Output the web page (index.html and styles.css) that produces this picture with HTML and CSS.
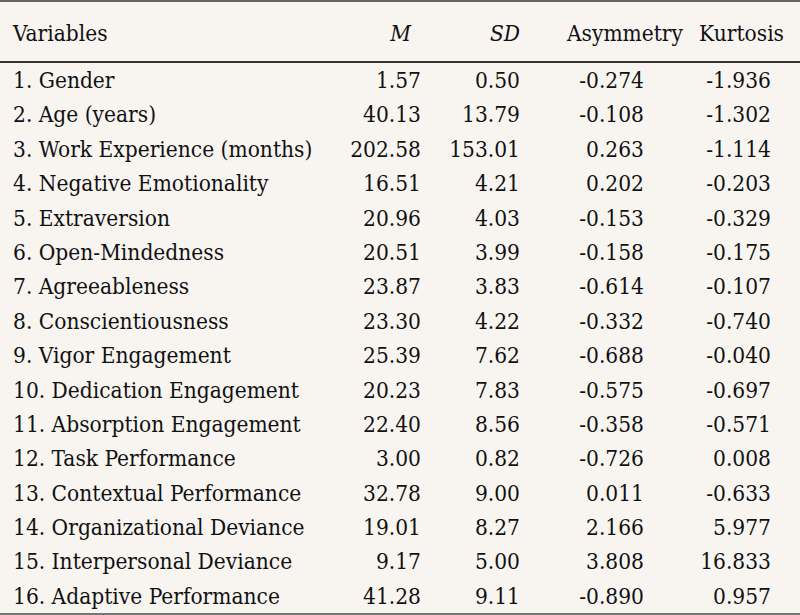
FILE: index.html
```html
<!DOCTYPE html>
<html lang="en">
<head>
<meta charset="utf-8">
<title>Descriptive statistics</title>
<link rel="stylesheet" href="styles.css">
</head>
<body>
<div class="table">
  <div class="row head">
    <div class="c name">Variables</div>
    <div class="c m"><i>M</i></div>
    <div class="c sd"><i>SD</i></div>
    <div class="c as">Asymmetry</div>
    <div class="c ku">Kurtosis</div>
  </div>
  <div class="body">
    <div class="row"><div class="c name">1. Gender</div><div class="c m">1.57</div><div class="c sd">0.50</div><div class="c as">-0.274</div><div class="c ku">-1.936</div></div>
    <div class="row"><div class="c name">2. Age (years)</div><div class="c m">40.13</div><div class="c sd">13.79</div><div class="c as">-0.108</div><div class="c ku">-1.302</div></div>
    <div class="row"><div class="c name">3. Work Experience (months)</div><div class="c m">202.58</div><div class="c sd">153.01</div><div class="c as">0.263</div><div class="c ku">-1.114</div></div>
    <div class="row"><div class="c name">4. Negative Emotionality</div><div class="c m">16.51</div><div class="c sd">4.21</div><div class="c as">0.202</div><div class="c ku">-0.203</div></div>
    <div class="row"><div class="c name">5. Extraversion</div><div class="c m">20.96</div><div class="c sd">4.03</div><div class="c as">-0.153</div><div class="c ku">-0.329</div></div>
    <div class="row"><div class="c name">6. Open-Mindedness</div><div class="c m">20.51</div><div class="c sd">3.99</div><div class="c as">-0.158</div><div class="c ku">-0.175</div></div>
    <div class="row"><div class="c name">7. Agreeableness</div><div class="c m">23.87</div><div class="c sd">3.83</div><div class="c as">-0.614</div><div class="c ku">-0.107</div></div>
    <div class="row"><div class="c name">8. Conscientiousness</div><div class="c m">23.30</div><div class="c sd">4.22</div><div class="c as">-0.332</div><div class="c ku">-0.740</div></div>
    <div class="row"><div class="c name">9. Vigor Engagement</div><div class="c m">25.39</div><div class="c sd">7.62</div><div class="c as">-0.688</div><div class="c ku">-0.040</div></div>
    <div class="row"><div class="c name">10. Dedication Engagement</div><div class="c m">20.23</div><div class="c sd">7.83</div><div class="c as">-0.575</div><div class="c ku">-0.697</div></div>
    <div class="row"><div class="c name">11. Absorption Engagement</div><div class="c m">22.40</div><div class="c sd">8.56</div><div class="c as">-0.358</div><div class="c ku">-0.571</div></div>
    <div class="row"><div class="c name">12. Task Performance</div><div class="c m">3.00</div><div class="c sd">0.82</div><div class="c as">-0.726</div><div class="c ku">0.008</div></div>
    <div class="row"><div class="c name">13. Contextual Performance</div><div class="c m">32.78</div><div class="c sd">9.00</div><div class="c as">0.011</div><div class="c ku">-0.633</div></div>
    <div class="row"><div class="c name">14. Organizational Deviance</div><div class="c m">19.01</div><div class="c sd">8.27</div><div class="c as">2.166</div><div class="c ku">5.977</div></div>
    <div class="row"><div class="c name">15. Interpersonal Deviance</div><div class="c m">9.17</div><div class="c sd">5.00</div><div class="c as">3.808</div><div class="c ku">16.833</div></div>
    <div class="row"><div class="c name">16. Adaptive Performance</div><div class="c m">41.28</div><div class="c sd">9.11</div><div class="c as">-0.890</div><div class="c ku">0.957</div></div>
  </div>
</div>
</body>
</html>
```
FILE: styles.css
```css
html, body {
  margin: 0;
  padding: 0;
  background: #f8f5f1;
}
body {
  width: 800px;
  height: 615px;
  overflow: hidden;
  font-family: "DejaVu Serif Condensed", "DejaVu Serif", serif;
  font-stretch: condensed;
  font-size: 22.5px;
  color: #111;
}
.table {
  border-top: 2px solid #666;
  border-bottom: 2px solid #777;
  display: flex;
  flex-direction: column;
}
.row {
  display: grid;
  grid-template-columns: 335px 86px 99px 163px 117px;
  height: 34.4px;
  line-height: 34.4px;
  white-space: nowrap;
}
.head {
  height: 59px;
  line-height: 62px;
  border-bottom: 2px solid #333;
}
.c { text-align: right; }
.name { text-align: left; padding-left: 13px; }
.head .m { padding-right: 10px; }
.as { padding-right: 39px; }
.head .as { padding-right: 0; }
.ku { padding-right: 29px; }
.head .ku { padding-right: 16px; }
```
